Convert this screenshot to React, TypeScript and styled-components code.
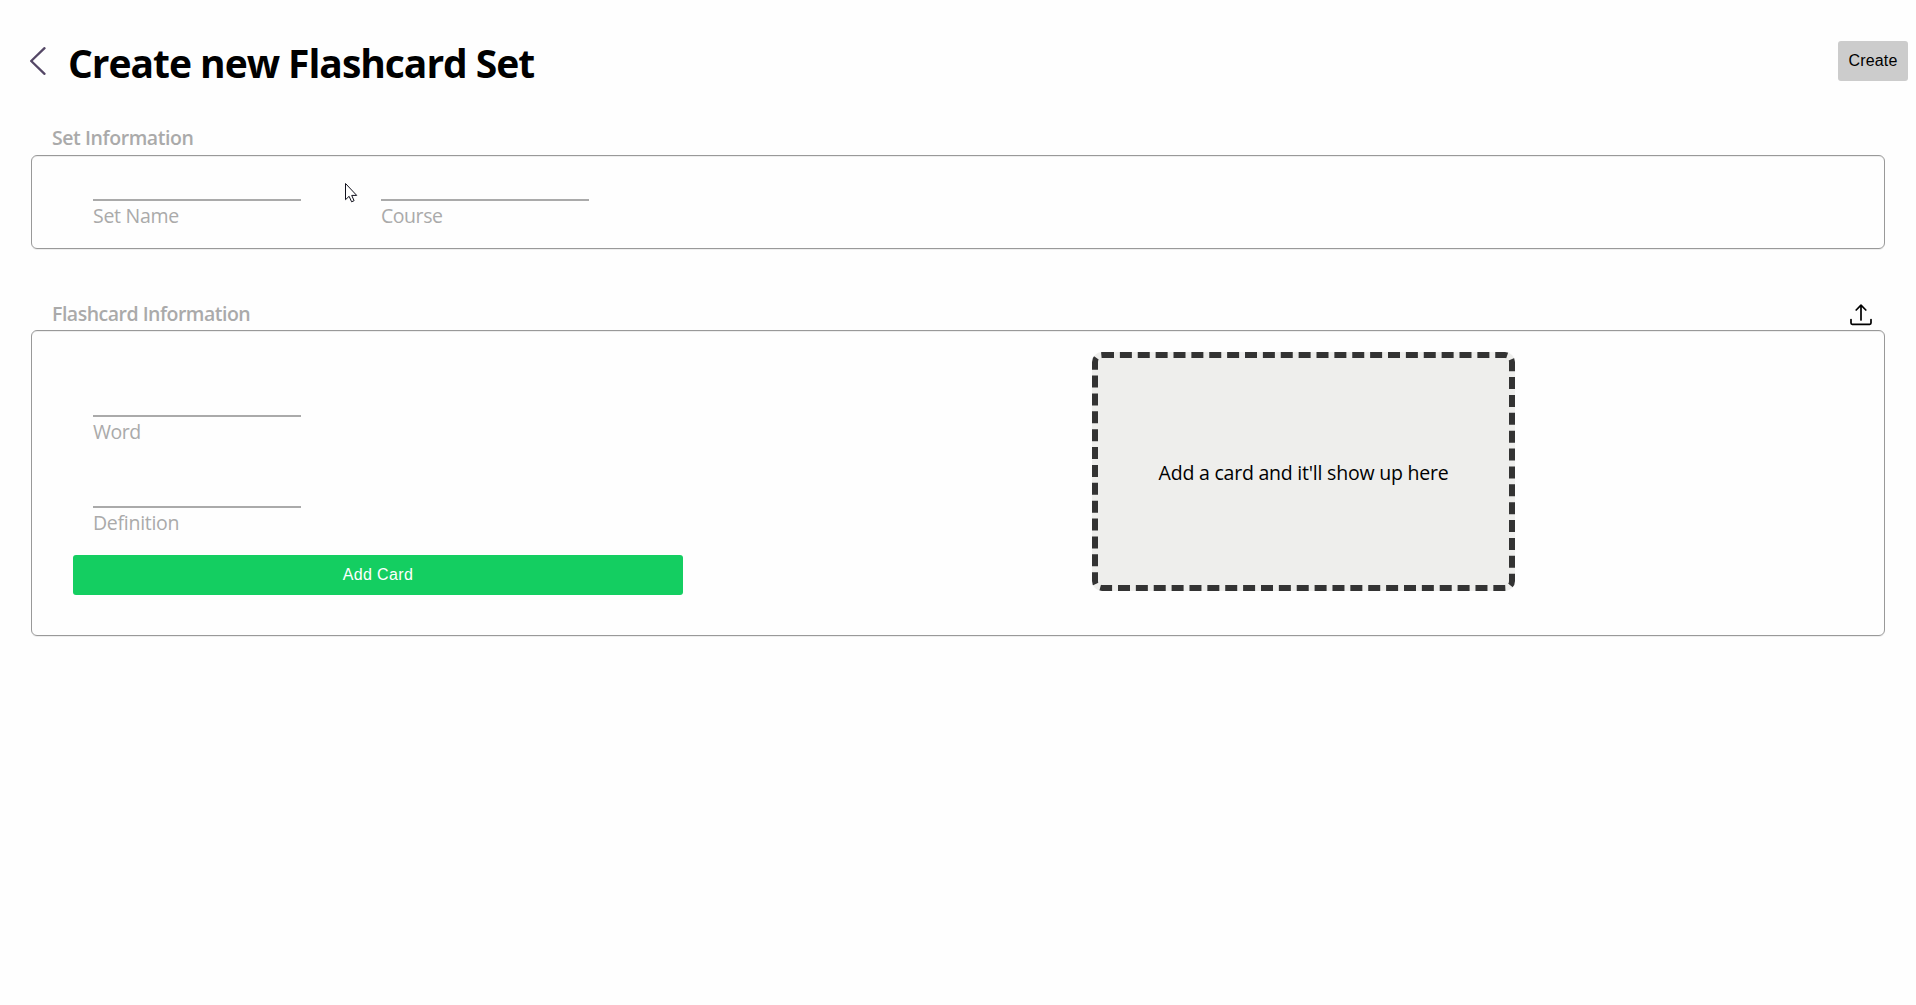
import React from "react";
import styled, { createGlobalStyle } from "styled-components";

const Global = createGlobalStyle`
  * { box-sizing: border-box; }
  body {
    margin: 0;
    background: #fefefe;
    color: #000;
    font-family: "Open Sans", "Noto Sans", sans-serif;
  }
`;

const Page = styled.main`
  position: relative;
  padding: 36px 31px 0;
  height: 1005px;
`;

const Header = styled.header`
  display: flex;
  align-items: flex-start;
  height: 88px;
  margin-right: -23px;
`;

const BackButton = styled.button`
  display: flex;
  align-items: flex-start;
  justify-content: flex-start;
  width: 38px;
  height: 50px;
  margin-left: -1px;
  padding: 11px 0 0;
  border: 0;
  background: none;
  svg { display: block; }
`;

const Title = styled.h1`
  margin: 0;
  flex: 1;
  font-size: 39px;
  line-height: 54px;
  font-weight: 700;
  white-space: nowrap;
  letter-spacing: -1.03px;
`;

const Button = styled.button<{ $primary?: boolean }>`
  height: 40px;
  border: 0;
  border-radius: 3px;
  padding: 0;
  font: 16px "Liberation Sans", sans-serif;
  letter-spacing: ${(p) => (p.$primary ? "0.35px" : "0.2px")};
  width: ${(p) => (p.$primary ? "610px" : "70px")};
  margin-top: ${(p) => (p.$primary ? "0" : "5px")};
  background: ${(p) => (p.$primary ? "#14ce61" : "#ccc")};
  color: ${(p) => (p.$primary ? "#fff" : "#000")};
`;

const SectionHead = styled.div<{ $height: number; $bottom: number }>`
  display: flex;
  justify-content: space-between;
  align-items: flex-end;
  height: ${(p) => p.$height}px;
  padding: 0 13px ${(p) => p.$bottom}px 21px;
  svg { display: block; margin-bottom: 1px; }
`;

const SectionTitle = styled.h2<{ $spacing: number }>`
  margin: 0;
  font-size: 19.5px;
  line-height: 27px;
  font-weight: 600;
  color: #aaa;
  letter-spacing: ${(p) => p.$spacing}px;
`;

const Panel = styled.section<{ $height: number }>`
  display: flex;
  height: ${(p) => p.$height}px;
  border: 1px solid #999;
  border-radius: 6px;
  box-shadow: 0 1px #eee, inset 0 1px #eee;
`;

const SetFields = styled.div`
  display: flex;
  gap: 80px;
  padding: 14px 0 0 61px;
`;

const CardForm = styled.div`
  display: flex;
  flex-direction: column;
  width: 926px;
  padding: 55px 0 0 41px;
`;

const CardFields = styled.div`
  display: flex;
  flex-direction: column;
  gap: 31px;
  height: 169px;
  padding-left: 20px;
`;

const Field = styled.label`
  display: flex;
  flex-direction: column;
  width: 208px;
  height: 60px;
`;

const Input = styled.input`
  height: 31px;
  flex: none;
  padding: 0;
  border: 0;
  border-bottom: 2px solid #aaa;
  background: transparent;
  outline: none;
`;

const Label = styled.span<{ $spacing: number }>`
  margin-top: 1px;
  font-size: 19.5px;
  line-height: 28px;
  color: #aaa;
  letter-spacing: ${(p) => p.$spacing}px;
`;

const Preview = styled.div`
  display: flex;
  align-items: center;
  justify-content: center;
  width: 423px;
  height: 239px;
  margin: 21px 0 0 134px;
  padding-top: 2px;
  border: 6px dashed #333;
  border-radius: 10px;
  background: #eeeeec;
  font-size: 19.5px;
  letter-spacing: -0.22px;
  white-space: nowrap;
`;

const Cursor = styled.svg`
  position: absolute;
  left: 345px;
  top: 183px;
`;

const TextField = ({ label, spacing = 0 }: { label: string; spacing?: number }) => (
  <Field>
    <Input type="text" />
    <Label $spacing={spacing}>{label}</Label>
  </Field>
);

export default function App() {
  return (
    <Page>
      <Global />
      <Header>
        <BackButton aria-label="Back">
          <svg width="16" height="28" viewBox="0 0 16 28" fill="none" stroke="#544766" strokeWidth="2.3" strokeLinecap="round" strokeLinejoin="round">
            <path d="M14.5 1.2 1.2 14 14.5 26.8" />
          </svg>
        </BackButton>
        <Title>Create new Flashcard Set</Title>
        <Button>Create</Button>
      </Header>
      <SectionHead $height={31} $bottom={4}>
        <SectionTitle $spacing={-0.42}>Set Information</SectionTitle>
      </SectionHead>
      <Panel $height={94}>
        <SetFields>
          <TextField label="Set Name" spacing={-0.28} />
          <TextField label="Course" spacing={-0.45} />
        </SetFields>
      </Panel>
      <SectionHead $height={81} $bottom={3}>
        <SectionTitle $spacing={-0.5}>Flashcard Information</SectionTitle>
        <svg width="22" height="22" viewBox="0 0 22 22" fill="none" stroke="#000" strokeWidth="1.7" strokeLinecap="round" strokeLinejoin="round">
          <path d="M11 16V1.2M6.2 6 11 1.2 15.8 6" />
          <path d="M1 15.5v3.6c0 .8.5 1.3 1.3 1.3h17.4c.8 0 1.3-.5 1.3-1.3v-3.6" />
        </svg>
      </SectionHead>
      <Panel $height={306}>
        <CardForm>
          <CardFields>
            <TextField label="Word" spacing={-0.45} />
            <TextField label="Definition" spacing={-0.28} />
          </CardFields>
          <Button $primary>Add Card</Button>
        </CardForm>
        <Preview>Add a card and it'll show up here</Preview>
      </Panel>
      <Cursor width="13" height="20" viewBox="0 0 13 20" fill="#fff" stroke="#10101c" strokeWidth="1">
        <path d="M.5.5v16.2l3.6-3.4 2.5 5.5 2.5-1.1-2.4-5.3h5z" />
      </Cursor>
    </Page>
  );
}
